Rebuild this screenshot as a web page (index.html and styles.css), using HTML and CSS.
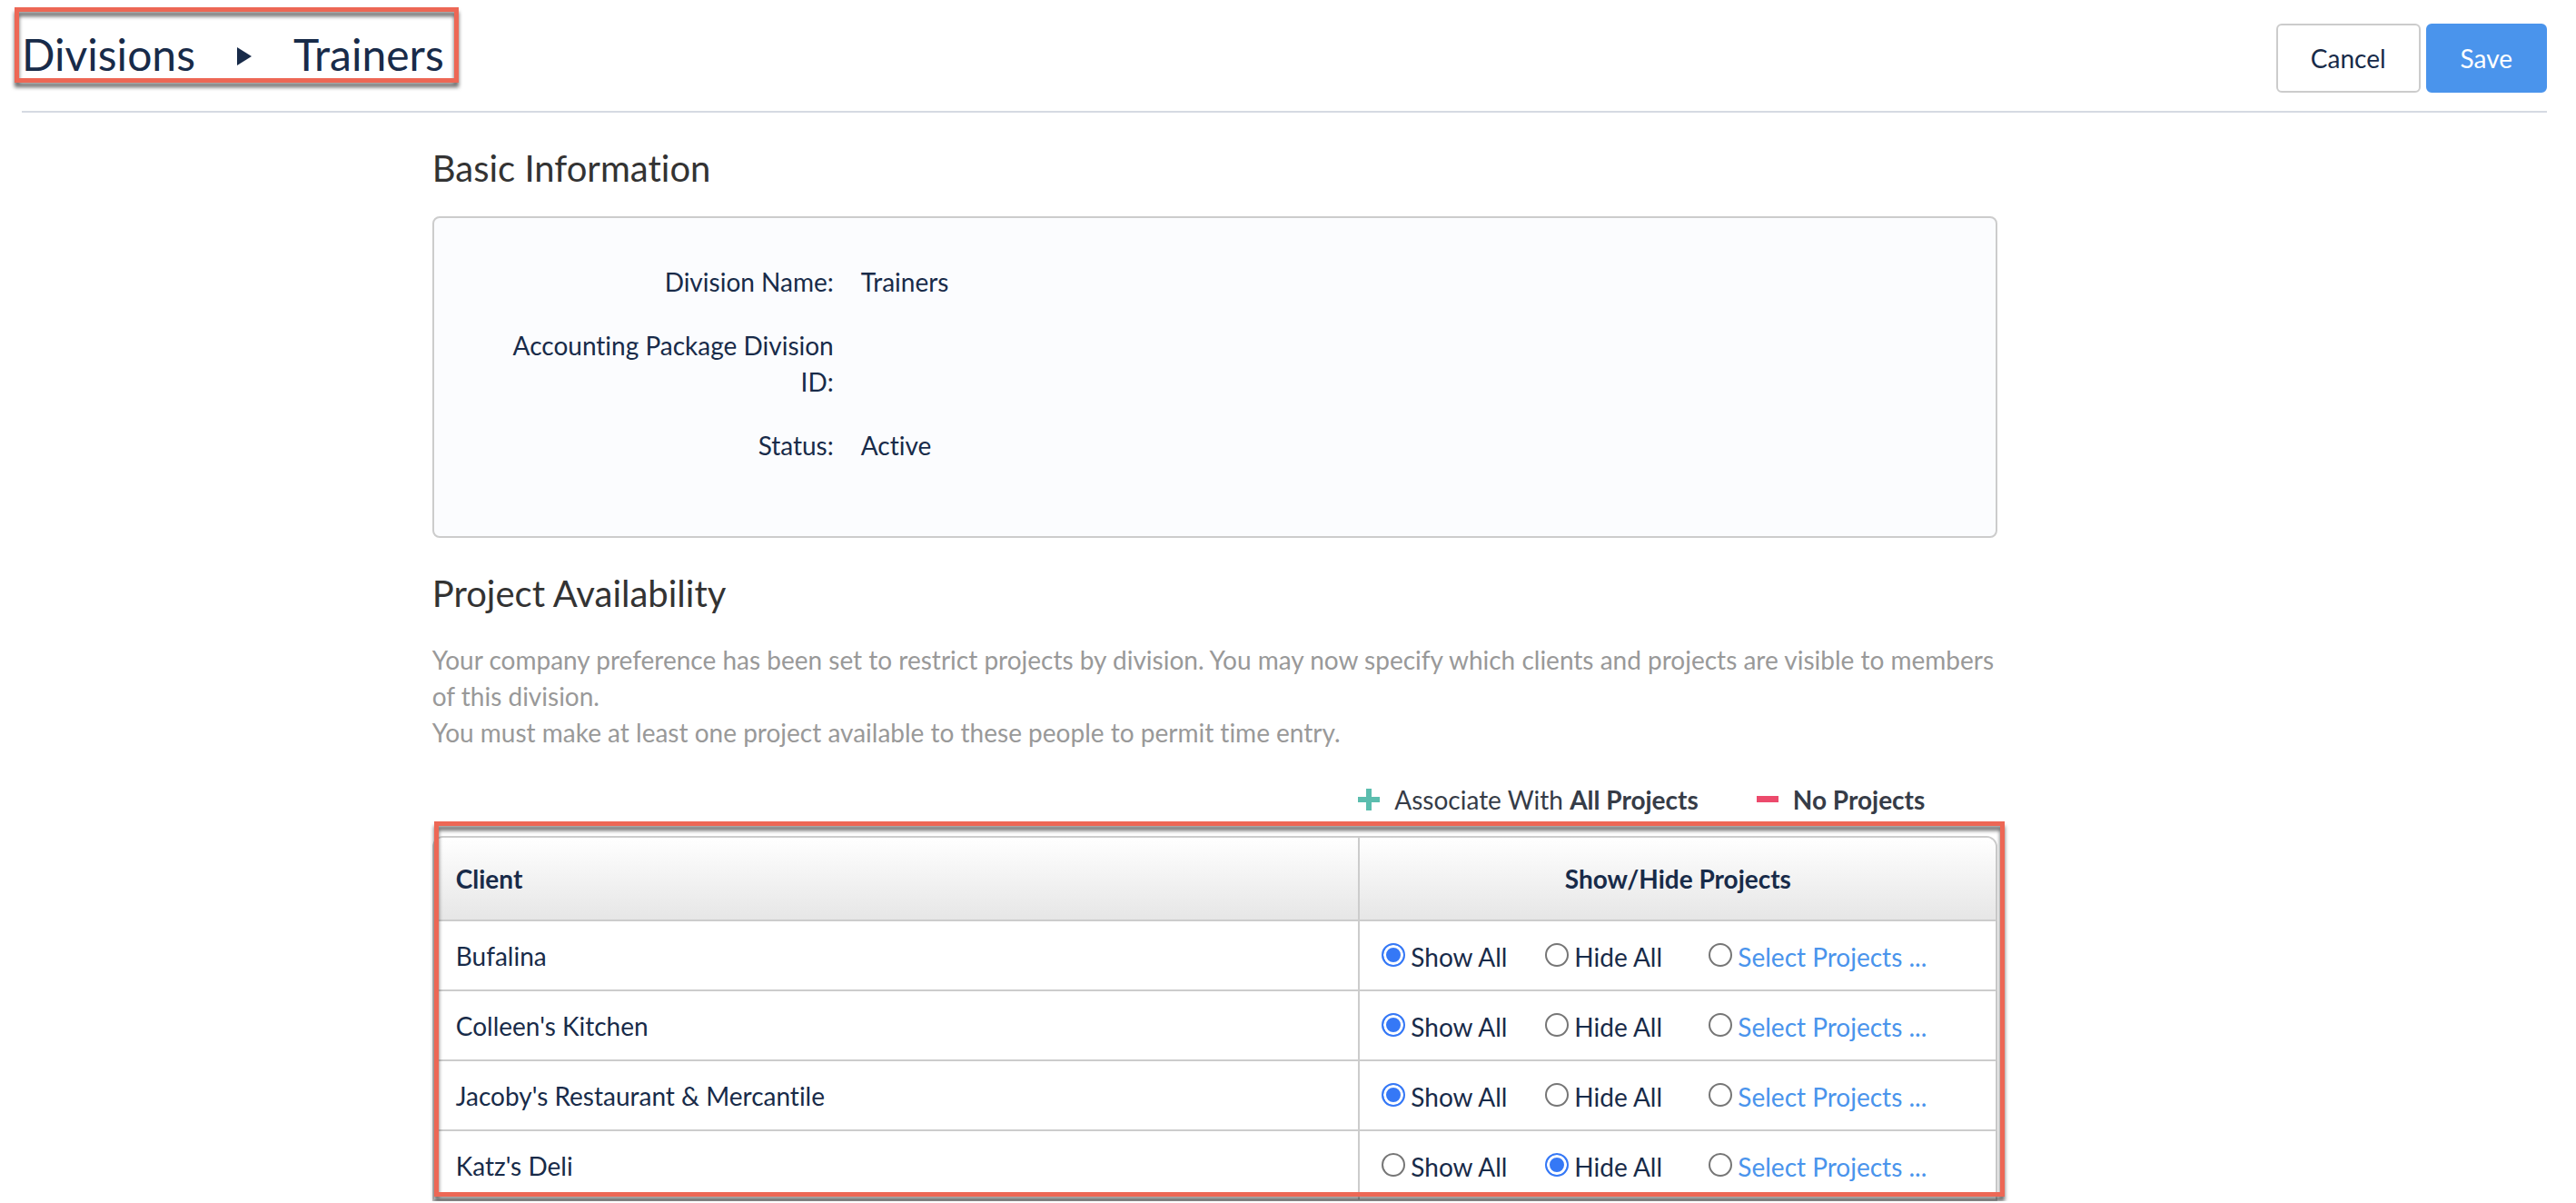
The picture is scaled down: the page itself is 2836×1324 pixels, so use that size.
FILE: index.html
```html
<!DOCTYPE html>
<html lang="en">
<head>
    <meta charset="UTF-8">
    <meta name="viewport" content="width=device-width, initial-scale=1.0">
    <title>Divisions - Trainers</title>
    <link rel="stylesheet" href="styles.css">
</head>
<body>
    <header class="page-header">
        <nav class="breadcrumb highlight">
            <a href="#divisions">Divisions</a>
            <svg class="arrow" viewBox="0 0 16 20" aria-hidden="true"><path d="M0 0L16 10L0 20Z"/></svg>
            <h1>Trainers</h1>
        </nav>
        <div class="actions">
            <button type="button" class="btn">Cancel</button>
            <button type="button" class="btn btn-primary">Save</button>
        </div>
    </header>

    <main class="content">
        <h2>Basic Information</h2>
        <dl class="card">
            <dt>Division Name:</dt>
            <dd>Trainers</dd>
            <dt>Accounting Package Division ID:</dt>
            <dd></dd>
            <dt>Status:</dt>
            <dd>Active</dd>
        </dl>

        <h2>Project Availability</h2>
        <p class="help">Your company preference has been set to restrict projects by division. You may now specify which clients and projects are visible to members of this division.<br>You must make at least one project available to these people to permit time entry.</p>

        <div class="bulk">
            <button type="button">
                <svg class="plus" viewBox="0 0 24 24" aria-hidden="true"><path d="M9 0h6v9h9v6h-9v9H9v-9H0V9h9z"/></svg>
                <span>Associate With <b>All Projects</b></span>
            </button>
            <button type="button">
                <svg class="minus" viewBox="0 0 24 24" aria-hidden="true"><path d="M0 8h24v7H0z"/></svg>
                <b>No Projects</b>
            </button>
        </div>

        <div class="table-wrap highlight">
            <table class="clients">
                <thead>
                    <tr>
                        <th scope="col">Client</th>
                        <th scope="col" class="options-col">Show/Hide Projects</th>
                    </tr>
                </thead>
                <tbody>
                    <tr>
                        <td>Bufalina</td>
                        <td>
                            <div class="options">
                                <label><input type="radio" name="bufalina" checked>Show All</label>
                                <label><input type="radio" name="bufalina">Hide All</label>
                                <label><input type="radio" name="bufalina" aria-label="Select Projects"><a href="#select">Select Projects ...</a></label>
                            </div>
                        </td>
                    </tr>
                    <tr>
                        <td>Colleen's Kitchen</td>
                        <td>
                            <div class="options">
                                <label><input type="radio" name="colleens" checked>Show All</label>
                                <label><input type="radio" name="colleens">Hide All</label>
                                <label><input type="radio" name="colleens" aria-label="Select Projects"><a href="#select">Select Projects ...</a></label>
                            </div>
                        </td>
                    </tr>
                    <tr>
                        <td>Jacoby's Restaurant &amp; Mercantile</td>
                        <td>
                            <div class="options">
                                <label><input type="radio" name="jacobys" checked>Show All</label>
                                <label><input type="radio" name="jacobys">Hide All</label>
                                <label><input type="radio" name="jacobys" aria-label="Select Projects"><a href="#select">Select Projects ...</a></label>
                            </div>
                        </td>
                    </tr>
                    <tr>
                        <td>Katz's Deli</td>
                        <td>
                            <div class="options">
                                <label><input type="radio" name="katzs">Show All</label>
                                <label><input type="radio" name="katzs" checked>Hide All</label>
                                <label><input type="radio" name="katzs" aria-label="Select Projects"><a href="#select">Select Projects ...</a></label>
                            </div>
                        </td>
                    </tr>
                </tbody>
            </table>
        </div>
    </main>
</body>
</html>
```

FILE: styles.css
```css
* {
    box-sizing: border-box;
}
body {
    margin: 0;
    padding: 0 32px 0 24px;
    font-family: Lato, sans-serif;
    font-size: 28px;
    font-variant-ligatures: none;
    line-height: 40px;
    color: #182b49;
    background: #fff;
}
a {
    color: #4a94ec;
    text-decoration: none;
}
button {
    font: inherit;
    font-variant-ligatures: none;
    cursor: pointer;
}

/* Header */
.page-header {
    display: flex;
    justify-content: space-between;
    align-items: flex-start;
    padding: 26px 0 20px;
    border-bottom: 2px solid #d5dae2;
}
.breadcrumb {
    display: flex;
    align-items: center;
    height: 68px;
    font-size: 48px;
}
.breadcrumb a {
    color: inherit;
}
.breadcrumb h1 {
    margin: 0;
    font-size: 48px;
    font-weight: 400;
}
.arrow {
    width: 16px;
    height: 20px;
    margin: 4px 46px 0;
    fill: #182b49;
}
.actions {
    display: flex;
    gap: 6px;
}
.btn {
    height: 76px;
    padding: 0 36px;
    border: 2px solid #ccc;
    border-radius: 6px;
    color: #182b49;
    background: #fff;
}
.btn-primary {
    border-color: #4a94ec;
    color: #fff;
    background: #4a94ec;
}

/* Red callout frame */
.highlight {
    position: relative;
}
.highlight::after {
    content: "";
    position: absolute;
    border: 5px solid #ed6755;
    filter: drop-shadow(0 5px 2px rgba(0, 0, 0, 0.6));
    pointer-events: none;
}
.breadcrumb::after {
    inset: -18px -16px 3px -8px;
}
.table-wrap::after {
    inset: -16px -8px 5px 2px;
}

/* Content */
.content {
    width: 62%;
    margin-left: 16.25%;
}
h2 {
    margin: 0;
    padding: 38px 0 30px;
    font-size: 40px;
    font-weight: 400;
    line-height: 46px;
    color: #333;
}
.card {
    display: grid;
    grid-template-columns: 380px 1fr;
    gap: 30px;
    margin: 0;
    padding: 50px 60px 80px;
    border: 2px solid #ccc;
    border-radius: 8px;
    background: #fbfcfe;
}
.card dt {
    text-align: right;
}
.card dd {
    margin: 0;
}
.help {
    margin: 0;
    color: #999;
}
.bulk {
    display: flex;
    justify-content: flex-end;
    gap: 64px;
    padding: 34px 80px 20px 0;
}
.bulk button {
    display: flex;
    align-items: center;
    gap: 16px;
    padding: 0;
    border: 0;
    color: #363c47;
    background: none;
}
.bulk svg {
    width: 24px;
    height: 24px;
}
.plus {
    fill: #5bbdae;
}
.minus {
    fill: #ec4a6c;
}

/* Clients table */
.clients {
    width: 100%;
    border: 2px solid #ccc;
    border-top-left-radius: 12px;
    border-top-right-radius: 12px;
    border-spacing: 0;
    overflow: hidden;
}
.clients thead {
    background: linear-gradient(#fff, #e6e6e6);
}
.clients th {
    height: 90px;
    padding: 0 24px;
    text-align: left;
}
.clients .options-col {
    width: 702px;
    text-align: center;
}
.clients td {
    height: 77px;
    padding: 0 24px;
    border-top: 2px solid #ccc;
}
.clients th + th,
.clients td + td {
    border-left: 2px solid #ccc;
}
.options {
    display: grid;
    grid-template-columns: 180px 180px 1fr;
    padding-top: 2px;
}
.options label {
    display: flex;
    align-items: center;
    gap: 6px;
}
.options input {
    appearance: none;
    width: 26px;
    height: 26px;
    margin: 0 0 4px;
    border: 2px solid #767676;
    border-radius: 50%;
    background: #fff;
}
.options input:checked {
    border-color: #3578f6;
    background: #3578f6;
    box-shadow: inset 0 0 0 3px #fff;
}
```
